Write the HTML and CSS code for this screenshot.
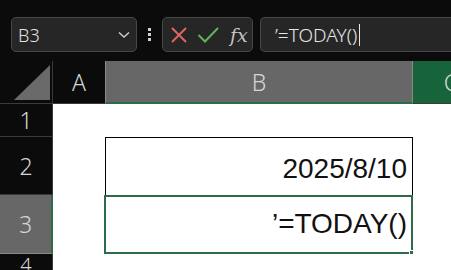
FILE: index.html
```html
<!DOCTYPE html>
<html lang="ja">
<head>
  <meta charset="UTF-8">
  <title>Sheet</title>
  <link rel="stylesheet" href="styles.css">
</head>
<body>
  <div class="toolbar">
    <div class="namebox">
      <span>B3</span>
      <svg width="12" height="8" viewBox="0 0 12 8"><path d="M1 1.5 L6 6 L11 1.5" fill="none" stroke="#d0d0d0" stroke-width="1.4"/></svg>
    </div>
    <div class="dots"><i></i><i></i><i></i></div>
    <div class="fxbtns">
      <svg width="18" height="18" viewBox="0 0 18 18"><path d="M2 2 L16 16 M16 2 L2 16" stroke="#e06464" stroke-width="2" fill="none"/></svg>
      <svg width="22" height="18" viewBox="0 0 22 18"><path d="M1.5 9 L8 15.5 L21 2" stroke="#5cb45c" stroke-width="2" fill="none"/></svg>
      <span class="fx">fx</span>
    </div>
    <div class="formula"><span>’=TODAY()</span><i class="caret"></i></div>
  </div>

  <div class="sheet">
    <div class="corner"><div class="tri"></div></div>
    <div class="colhead">A</div>
    <div class="colhead sel">B</div>
    <div class="colhead green">C</div>

    <div class="rowhead">1</div>
    <div class="cell"></div>
    <div class="cell"></div>
    <div class="cell"></div>

    <div class="rowhead">2</div>
    <div class="cell"></div>
    <div class="cell boxed">2025/8/10</div>
    <div class="cell"></div>

    <div class="rowhead sel">3</div>
    <div class="cell"></div>
    <div class="cell active">’=TODAY()<i class="handle"></i></div>
    <div class="cell"></div>

    <div class="rowhead last">4</div>
    <div class="cell"></div>
    <div class="cell"></div>
    <div class="cell"></div>
  </div>
</body>
</html>
```

FILE: styles.css
```css
* {
  margin: 0;
  padding: 0;
  box-sizing: border-box;
}
body {
  width: 451px;
  height: 270px;
  overflow: hidden;
  background: #0b0b0b;
  font-family: "Noto Sans", sans-serif;
}
.toolbar {
  height: 61px;
  display: flex;
  align-items: flex-start;
  padding: 17px 0 0 11px;
}
.namebox {
  width: 126px;
  height: 35px;
  background: #262626;
  border: 1px solid #474747;
  border-radius: 5px;
  display: flex;
  align-items: center;
  justify-content: space-between;
  padding: 0 6px 0 6px;
  color: #e2e2e2;
  font-size: 18px;
  font-weight: 300;
}
.dots {
  width: 25px;
  height: 35px;
  display: flex;
  flex-direction: column;
  align-items: center;
  justify-content: center;
  gap: 2px;
}
.dots i {
  width: 3px;
  height: 3px;
  background: #d0d0d0;
}
.fxbtns {
  width: 91px;
  height: 35px;
  background: #262626;
  border: 1px solid #474747;
  border-radius: 5px;
  display: flex;
  align-items: center;
  gap: 9px;
  padding-left: 7px;
}
.fx {
  font-family: "DejaVu Serif", serif;
  font-style: italic;
  color: #c4c4c4;
  font-size: 19px;
  margin-left: 2px;
}
.formula {
  margin-left: 7px;
  flex: 1;
  height: 35px;
  background: #262626;
  border: 1px solid #474747;
  border-right: none;
  border-radius: 5px 0 0 5px;
  display: flex;
  align-items: center;
  padding-left: 14px;
  color: #e6e6e6;
  font-size: 19px;
  font-weight: 300;
}
.caret {
  width: 1px;
  height: 22px;
  background: #e6e6e6;
  margin-left: 2px;
}
.sheet {
  width: 489px;
  display: grid;
  grid-template-columns: 53px 52px 308px 76px;
  grid-template-rows: 43px 33px 58px 59px 16px;
}
.corner {
  border-right: 1px solid #3a3a3a;
  border-bottom: 1px solid #3a3a3a;
  padding: 4px 3px 3px 14px;
}
.tri {
  width: 36px;
  height: 35px;
  background: #6a6a6a;
  clip-path: polygon(100% 0, 100% 100%, 0 100%);
}
.colhead {
  display: flex;
  align-items: center;
  justify-content: center;
  color: #d6d6d6;
  font-size: 23px;
  font-weight: 300;
  border-bottom: 1px solid #3a3a3a;
}
.colhead.sel {
  background: #676767;
  border-left: 1px solid #8a8a8a;
  border-right: 1px solid #8a8a8a;
  border-bottom: 2px solid #2e6b4a;
}
.colhead.green {
  background: #17643a;
}
.rowhead {
  display: flex;
  align-items: center;
  justify-content: center;
  color: #d6d6d6;
  font-size: 23px;
  font-weight: 300;
  border-bottom: 1px solid #3a3a3a;
  border-right: 1px solid #3a3a3a;
}
.rowhead.sel {
  background: #676767;
  border-right: 2px solid #2e6b4a;
  border-bottom: 1px solid #8a8a8a;
}
.rowhead.last {
  align-items: flex-start;
  font-size: 20px;
  line-height: 16px;
  padding-top: 3px;
  border-bottom: none;
}
.cell {
  background: #fff;
  position: relative;
  font-family: "Liberation Sans", sans-serif;
  font-size: 28px;
  color: #111;
  display: flex;
  align-items: flex-end;
  justify-content: flex-end;
  padding: 0 5px 10px 0;
}
.boxed {
  border: 1px solid #000;
  border-bottom: none;
}
.active {
  border: 2px solid #2e6b4a;
  margin-left: -1px;
  padding-bottom: 12px;
  padding-right: 4px;
}
.handle {
  position: absolute;
  right: -4px;
  bottom: -4px;
  width: 6px;
  height: 6px;
  background: #2e6b4a;
  border: 1px solid #fff;
}
```
